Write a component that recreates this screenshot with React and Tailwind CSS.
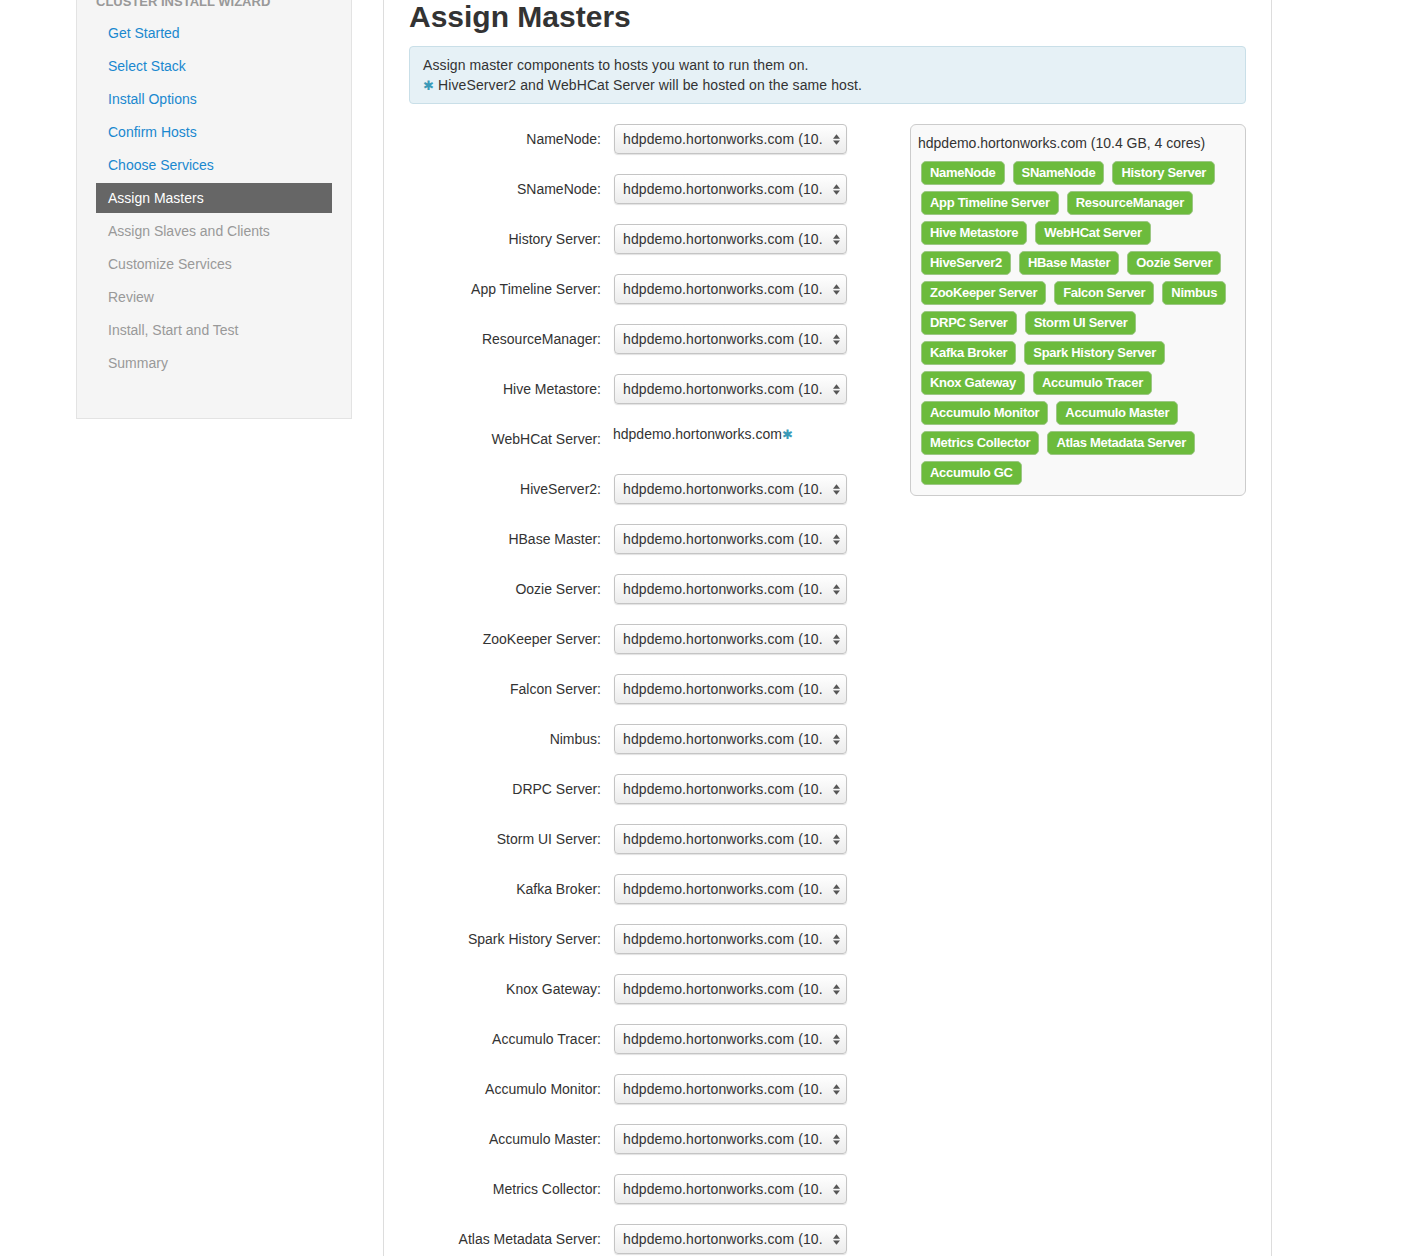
const steps = [
  { label: "Get Started", state: "done" },
  { label: "Select Stack", state: "done" },
  { label: "Install Options", state: "done" },
  { label: "Confirm Hosts", state: "done" },
  { label: "Choose Services", state: "done" },
  { label: "Assign Masters", state: "active" },
  { label: "Assign Slaves and Clients", state: "todo" },
  { label: "Customize Services", state: "todo" },
  { label: "Review", state: "todo" },
  { label: "Install, Start and Test", state: "todo" },
  { label: "Summary", state: "todo" },
];

const masters = [
  "NameNode",
  "SNameNode",
  "History Server",
  "App Timeline Server",
  "ResourceManager",
  "Hive Metastore",
  "WebHCat Server",
  "HiveServer2",
  "HBase Master",
  "Oozie Server",
  "ZooKeeper Server",
  "Falcon Server",
  "Nimbus",
  "DRPC Server",
  "Storm UI Server",
  "Kafka Broker",
  "Spark History Server",
  "Knox Gateway",
  "Accumulo Tracer",
  "Accumulo Monitor",
  "Accumulo Master",
  "Metrics Collector",
  "Atlas Metadata Server",
];

// badge rows as they wrap in the host card
const badgeRows = [
  ["NameNode", "SNameNode", "History Server"],
  ["App Timeline Server", "ResourceManager"],
  ["Hive Metastore", "WebHCat Server"],
  ["HiveServer2", "HBase Master", "Oozie Server"],
  ["ZooKeeper Server", "Falcon Server", "Nimbus"],
  ["DRPC Server", "Storm UI Server"],
  ["Kafka Broker", "Spark History Server"],
  ["Knox Gateway", "Accumulo Tracer"],
  ["Accumulo Monitor", "Accumulo Master"],
  ["Metrics Collector", "Atlas Metadata Server"],
  ["Accumulo GC"],
];

function Star() {
  return <span className="text-[#3a9ab8] text-[13px]">✱</span>;
}

function HostSelect() {
  return (
    <div className="flex items-center justify-between w-[233px] h-[30px] pl-[8px] pr-[6px] rounded-[4px] border border-[#c4c4c4] bg-gradient-to-b from-white to-[#ececec] shadow-[0_1px_1px_rgba(0,0,0,0.12)] text-[14px] text-[#333]">
      <span className="whitespace-nowrap tracking-[0.1px]">hdpdemo.hortonworks.com (10.</span>
      <svg viewBox="0 0 8 12" className="w-[7px] h-[11px] fill-[#555]">
        <path d="M4 0 L8 5 H0 Z" />
        <path d="M0 7 H8 L4 12 Z" />
      </svg>
    </div>
  );
}

export default function App() {
  return (
    <div className="font-['Liberation_Sans',Arial,sans-serif] bg-white min-h-[1256px] overflow-hidden">
      <div className="flex items-start pl-[76px] -mt-[27px]">
        {/* wizard nav */}
        <div className="w-[276px] shrink-0 bg-[#f5f5f5] border border-[#e3e3e3] px-[19px] pt-[18px] pb-[40px]">
          <div className="h-[20px] leading-[20px] text-[13px] font-bold text-[#999] uppercase mb-[6px]">
            Cluster Install Wizard
          </div>
          <ul className="flex flex-col gap-[3px]">
            {steps.map((s) => (
              <li
                key={s.label}
                className={
                  "h-[30px] leading-[30px] pl-[12px] text-[14px] " +
                  (s.state === "active"
                    ? "bg-[#666] text-white"
                    : s.state === "done"
                    ? "text-[#1a88cf]"
                    : "text-[#999]")
                }
              >
                {s.label}
              </li>
            ))}
          </ul>
        </div>

        {/* main panel */}
        <div className="ml-[31px] w-[889px] shrink-0 border-x border-[#ddd] min-h-[1320px] px-[25px] pt-[24px]">
          <h2 className="text-[30px] leading-[40px] font-bold text-[#333]">Assign Masters</h2>
          <div className="mt-[9px] rounded-[4px] border border-[#c9dfe8] bg-[#e6f1f6] pl-[13px] pt-[8px] pb-[7px] text-[14px] leading-[20px] text-[#333] tracking-[0.1px]">
            <div>Assign master components to hosts you want to run them on.</div>
            <div>
              <Star /> HiveServer2 and WebHCat Server will be hosted on the same host.
            </div>
          </div>

          <div className="flex items-start mt-[20px]">
            <div className="flex flex-col gap-[20px]">
              {masters.map((m) => (
                <div key={m} className="flex items-center h-[30px]">
                  <div className="w-[192px] text-right text-[14px] text-[#333]">{m}:</div>
                  <div className="ml-[13px]">
                    {m === "WebHCat Server" ? (
                      <div className="-mt-[10px] -ml-[1px] text-[14px] text-[#333]">
                        hdpdemo.hortonworks.com
                        <Star />
                      </div>
                    ) : (
                      <HostSelect />
                    )}
                  </div>
                </div>
              ))}
            </div>

            <div className="ml-auto w-[336px] rounded-[6px] border border-[#ccc] bg-[#f9f9f9] pl-[10px] pr-[8px] pt-[8px] pb-[10px]">
              <div className="text-[14px] leading-[20px] text-[#333] -ml-[3px] whitespace-nowrap">
                hdpdemo.hortonworks.com (10.4 GB, 4 cores)
              </div>
              <div className="flex flex-col gap-[6px] mt-[8px]">
                {badgeRows.map((row, i) => (
                  <div key={i} className="flex gap-[8px]">
                    {row.map((b) => (
                      <span
                        key={b}
                        className="h-[24px] leading-[22px] px-[8px] rounded-[5px] border border-[#9cc784] bg-[#6cbb3c] text-white text-[13px] font-bold tracking-[-0.3px] whitespace-nowrap"
                      >
                        {b}
                      </span>
                    ))}
                  </div>
                ))}
              </div>
            </div>
          </div>
        </div>
      </div>
    </div>
  );
}
